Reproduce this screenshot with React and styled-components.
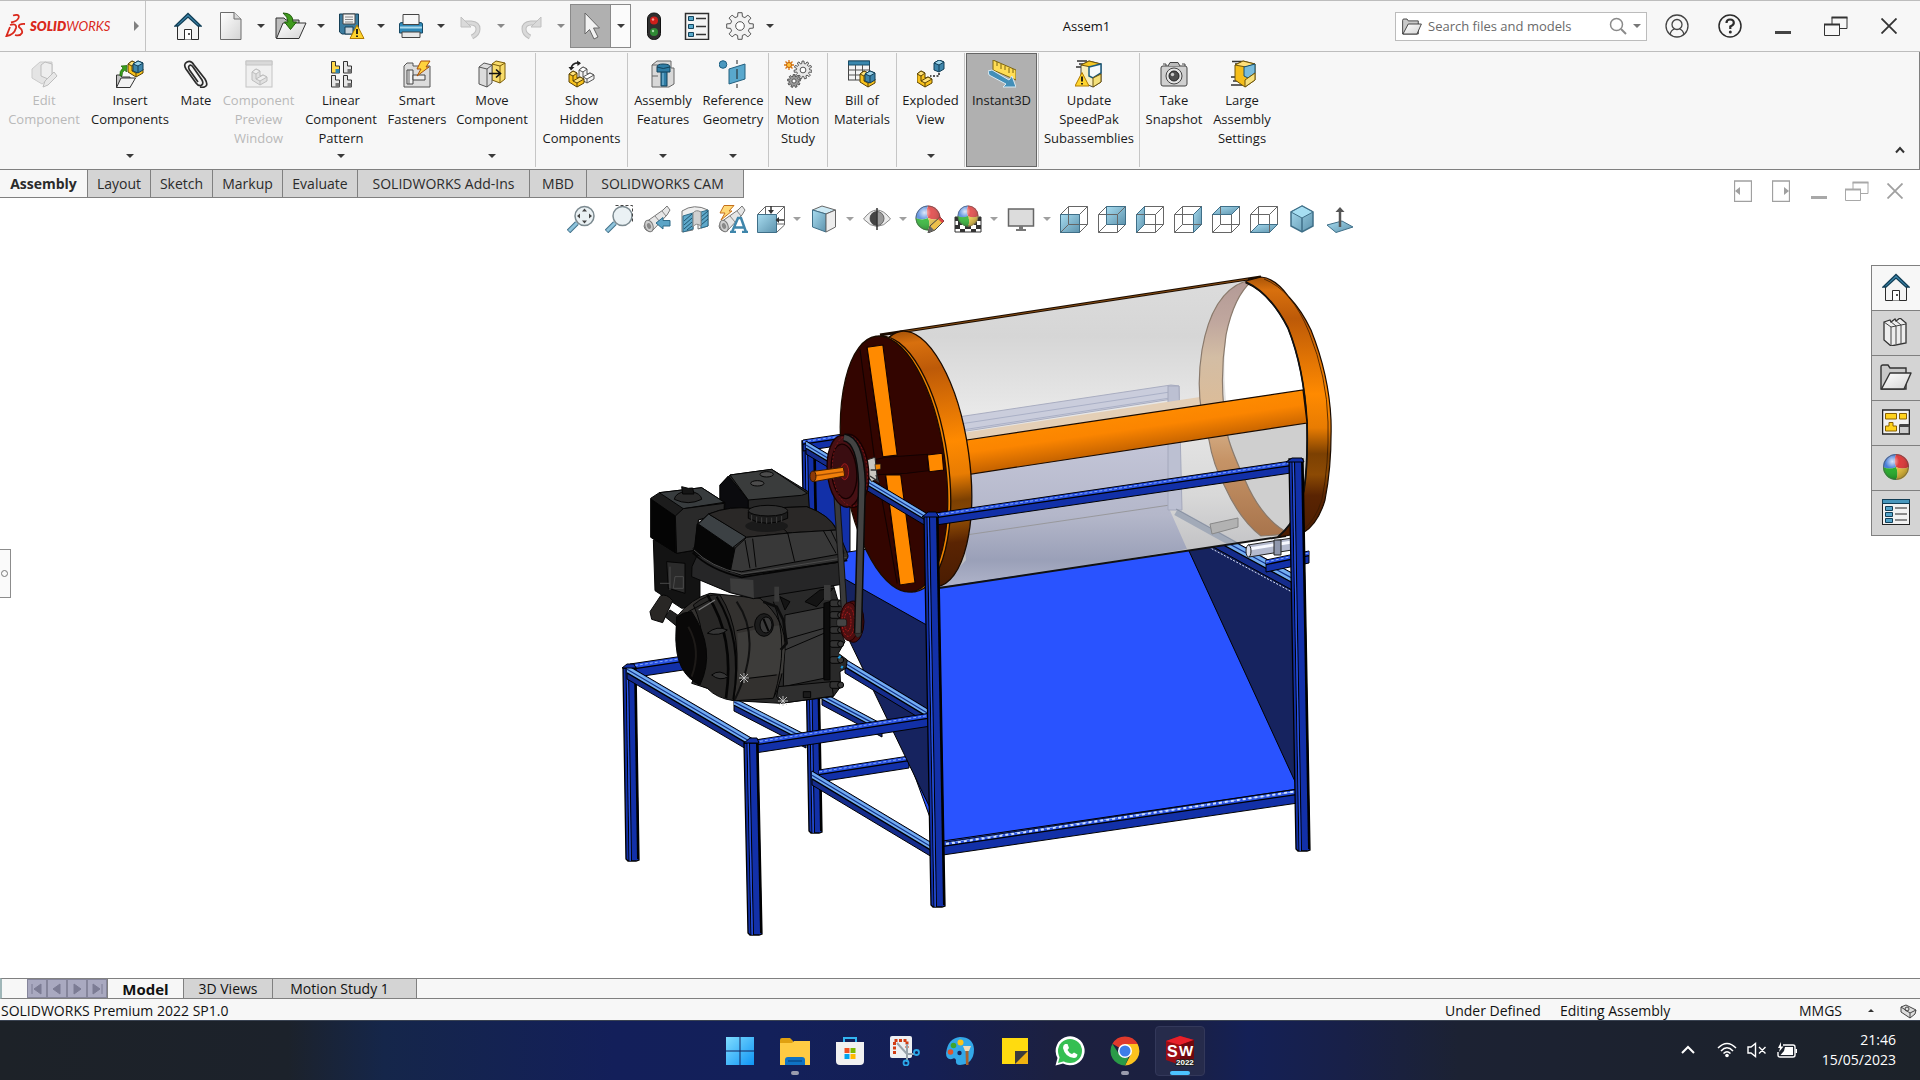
import { useState } from "react";
import styled, { createGlobalStyle, css } from "styled-components";

const GlobalStyle = createGlobalStyle`
  * {
    box-sizing: border-box;
  }
  body {
    margin: 0;
    background: #fff;
    color: #111;
    font-family: "Open Sans", "Noto Sans", sans-serif;
    font-size: 13px;
  }
  button {
    border: 0;
    padding: 0;
    background: none;
    color: inherit;
    font: inherit;
    cursor: pointer;
  }
  svg {
    display: block;
    flex: none;
  }
`;

const line = "#808080";
const paper = "#f7f7f7";
const gray = "#d4d4d4";

const Page = styled.div`
  display: flex;
  flex-direction: column;
  min-height: 100vh;
`;

/* ---------- title bar ---------- */

const TitleBar = styled.header`
  display: flex;
  align-items: center;
  height: 52px;
  background: ${paper};
  border-top: 1px solid #bdbdbd;
  border-bottom: 1px solid #bdbdbd;
`;

const Brand = styled.button`
  display: flex;
  align-items: center;
  gap: 4px;
  align-self: stretch;
  width: 146px;
  padding-left: 5px;
  border-right: 1px solid #c4c4c4;
  color: #da291c;
  font-family: Lato, sans-serif;
  font-size: 13px;
  font-style: italic;

  b {
    font-weight: 800;
  }
`;

const BrandArrow = styled.i`
  margin-left: auto;
  margin-right: 6px;
  border-left: 5px solid #808080;
  border-top: 5px solid transparent;
  border-bottom: 5px solid transparent;
`;

const Toolbar = styled.div`
  display: flex;
  align-items: center;
  padding-left: 20px;
`;

const ToolItem = styled.div`
  display: flex;
  align-items: center;
  height: 44px;
  ${(p) =>
    p.$active &&
    css`
      border: 1px solid #8a8a8a;
      margin: 0 1px;
      background: #fbfbfb;

      button:first-child {
        background: #b0b0b0;
        border-right: 1px solid #8a8a8a;
        width: 40px;
      }
      button:last-child {
        width: 19px;
      }
    `}
`;

const ToolButton = styled.button`
  display: flex;
  align-items: center;
  justify-content: center;
  width: 43px;
  height: 100%;
`;

const ArrowButton = styled.button`
  display: flex;
  align-items: center;
  justify-content: center;
  width: ${(p) => p.$w || 17}px;
  height: 100%;
`;

const Down = styled.i`
  border-top: 4px solid ${(p) => p.$color || "#3a3a3a"};
  border-left: 4px solid transparent;
  border-right: 4px solid transparent;
`;

const DocTitle = styled.h1`
  flex: 1;
  margin: 0;
  text-align: center;
  font-size: 13px;
  font-weight: 400;
`;

const Search = styled.label`
  display: flex;
  align-items: center;
  width: 252px;
  height: 29px;
  padding: 0 0 0 6px;
  background: #fff;
  border: 1px solid #bcbcbc;

  input {
    flex: 1;
    min-width: 0;
    margin-left: 6px;
    padding: 0;
    border: 0;
    outline: 0;
    background: none;
    font: inherit;
    font-size: 13px;
  }
  input::placeholder {
    color: #6a6a6a;
    opacity: 1;
  }
`;

const WindowTools = styled.div`
  display: flex;
  padding: 0 5px 0 3px;
`;

const WindowButton = styled.button`
  display: flex;
  align-items: center;
  justify-content: center;
  width: 53px;
  height: 44px;
`;

/* ---------- ribbon ---------- */

const Ribbon = styled.div`
  display: flex;
  height: 118px;
  padding: 1px 0 2px;
  background: ${paper};
  border-bottom: 1px solid ${line};
  border-right: 1px solid ${line};
`;

const Group = styled.div`
  display: flex;
  border-right: ${(p) => (p.$last ? 0 : 1)}px solid #c6c6c6;
`;

const RibbonButton = styled.button`
  display: flex;
  flex-direction: column;
  align-items: center;
  width: ${(p) => p.$w}px;
  padding-top: 7px;
  line-height: 19px;
  white-space: pre;
  color: ${(p) => (p.disabled ? "#b9b9b9" : "#1a1a1a")};

  svg {
    margin-bottom: 3px;
  }
  ${(p) =>
    p.disabled &&
    css`
      svg {
        opacity: 0.75;
      }
    `}
  ${(p) =>
    p.$active &&
    css`
      margin: 0 1px;
      padding-top: 6px;
      background: #b0b0b0;
      border: 1px solid #666;
    `}
`;

const RibbonArrow = styled.span`
  display: flex;
  margin-top: auto;
  padding-bottom: 9px;
`;

const Collapse = styled.button`
  display: flex;
  align-self: flex-end;
  margin-left: auto;
  padding: 0 14px 13px;
`;

/* ---------- command tabs ---------- */

const TabRow = styled.div`
  display: flex;
  align-items: flex-start;
  justify-content: space-between;
  height: 35px;
`;

const Tabs = styled.div`
  display: flex;
  height: 28px;
  border-bottom: 1px solid ${line};
`;

const Tab = styled.button`
  width: ${(p) => p.$w}px;
  height: 27px;
  padding-right: ${(p) => p.$pad || 0}px;
  border-right: 1px solid ${line};
  background: ${(p) => (p.$active ? paper : gray)};
  color: #2b2b2b;
  font-size: 14px;
  line-height: 26px;
  font-weight: ${(p) => (p.$active ? 700 : 400)};
`;

const DocTools = styled.div`
  display: flex;
  padding: 9px 6px 0 0;
`;

const DocButton = styled.button`
  display: flex;
  align-items: center;
  justify-content: center;
  width: 38px;
  height: 24px;
`;

const ViewBar = styled.div`
  display: flex;
  justify-content: center;
  height: 28px;
`;

const ViewItem = styled.div`
  display: flex;
  align-items: center;
`;

const ViewButton = styled.button`
  display: flex;
  justify-content: center;
  width: 38px;
`;

/* ---------- workspace ---------- */

const Work = styled.main`
  display: flex;
  flex: 1;
  align-items: flex-start;
`;

const Handle = styled.button`
  display: flex;
  align-items: center;
  justify-content: center;
  width: 11px;
  height: 49px;
  margin-top: 316px;
  padding-right: 2px;
  border: 1px solid #8c8c8c;
  border-left: 0;
  background: #fafafa;

  &::before {
    content: "";
    width: 5px;
    height: 5px;
    border: 1px solid #777;
    border-radius: 50%;
  }
`;

const Scene = styled.div`
  flex: 1;
  min-width: 0;

  svg {
    width: 100%;
    height: auto;
  }
`;

const TaskPane = styled.nav`
  display: flex;
  flex-direction: column;
  width: 49px;
  margin-top: 32px;
  border-top: 1px solid ${line};
  border-left: 1px solid ${line};
`;

const PaneButton = styled.button`
  display: flex;
  align-items: center;
  justify-content: center;
  height: 45px;
  padding-bottom: 2px;
  border-bottom: 1px solid ${line};
  background: ${(p) => (p.$active ? paper : gray)};
`;

/* ---------- bottom bars ---------- */

const BottomTabs = styled.div`
  display: flex;
  height: 21px;
  border-top: 1px solid ${line};
  border-bottom: 1px solid ${line};
  border-left: 2px solid #9fb6b8;
  background: ${paper};
`;

const NavButtons = styled.div`
  display: flex;
  width: 81px;
  margin-left: 25px;
  border-right: 1px solid ${line};
`;

const NavButton = styled.button`
  display: flex;
  align-items: center;
  justify-content: center;
  flex: 1;
  background: #a9a9c0;
  border: 1px solid #85859b;
`;

const BottomTab = styled.button`
  width: ${(p) => p.$w}px;
  padding-right: ${(p) => p.$pad || 0}px;
  border-right: 1px solid ${line};
  background: ${(p) => (p.$active ? paper : gray)};
  font-size: ${(p) => (p.$active ? 15 : 14)}px;
  line-height: 18px;
  font-weight: ${(p) => (p.$active ? 700 : 400)};
`;

const StatusBar = styled.footer`
  display: flex;
  align-items: center;
  height: 21px;
  padding: 3px 3px 0 1px;
  background: ${paper};
  font-size: 14px;
  line-height: 18px;
  overflow: hidden;
`;

const StatusRight = styled.div`
  display: flex;
  align-items: center;
  margin-left: auto;
`;

const StatusText = styled.span`
  width: ${(p) => p.$w}px;
`;

const Taskbar = styled.div`
  display: grid;
  grid-template-columns: 1fr auto 1fr;
  align-items: center;
  height: 60px;
  border-top: 1px solid #3a4352;
  background: linear-gradient(
    90deg,
    #1d2228 0%,
    #1c222b 15%,
    #15264a 20%,
    #131f5a 32%,
    #13205a 40%,
    #141f55 48%,
    #1c2040 55%,
    #1b2040 61%,
    #142056 65%,
    #182048 70%,
    #1c2233 76%,
    #1c2229 100%
  );
`;

const Apps = styled.div`
  display: flex;
  grid-column: 2;
  gap: 5px;
`;

const AppButton = styled.button`
  display: flex;
  flex-direction: column;
  align-items: center;
  width: 50px;
  height: 50px;
  padding-top: 9px;
  border-radius: 4px;
  border: 1px solid ${(p) => (p.$active ? "#33385a" : "transparent")};
  background: ${(p) => (p.$active ? "#262b4b" : "none")};

  &::after {
    content: "";
    width: ${(p) => (p.$active ? 20 : 8)}px;
    height: 4px;
    margin-top: 5px;
    border-radius: 2px;
    background: ${(p) => (p.$active ? "#4cc2ff" : p.$open ? "#9a9cae" : "none")};
  }
`;

const Tray = styled.div`
  display: flex;
  align-items: center;
  justify-content: flex-end;
  gap: 10px;
  padding: 0 24px 2px 0;
  color: #fff;
`;

const TrayChevron = styled.button`
  display: flex;
  margin-right: 12px;
`;

const Clock = styled.time`
  width: 89px;
  text-align: right;
  font-size: 14px;
  line-height: 20px;
`;

/* ---------- icons ---------- */

const Icon = ({ size = 28, w, h, box = "0 0 28 28", children }) => (
  <svg width={w || size} height={h || size} viewBox={box} fill="none" aria-hidden="true">
    {children}
  </svg>
);

// yellow bracket, origin at its top left corner, about 17 units wide
const Bracket = ({ t, fill = "#f8c21c", light = "#ffe27a", stroke = "#5a4205" }) => (
  <g transform={t} stroke={stroke} strokeLinejoin="round">
    <path d="M1 5 L5 2 L9 4 V9 L12 8 L16 10 V14 L9 18 L1 13Z" fill={fill} />
    <path d="M1 5 L5 2 L9 4 L5 7Z M5 12 L12 8 L16 10 L9 14Z" fill={light} />
    <path d="M5 7 V12 M9 14 V18" />
  </g>
);

const CubeMini = ({ t }) => (
  <g transform={t} stroke="#123f57" strokeLinejoin="round">
    <path d="M0 3 L5 0 L10 2 V9 L5 12 L0 10Z" fill="#3f86ab" />
    <path d="M0 3 L5 0 L10 2 L5 5Z" fill="#9cd3ea" />
    <path d="M5 5 V12" />
  </g>
);

const Warn = ({ t }) => (
  <g transform={t}>
    <path d="M7 0.5 L14 14 H0Z" fill="#ffd52e" stroke="#b07a00" strokeLinejoin="round" />
    <path d="M7 4.5 V9.5 M7 11 V12.6" stroke="#111" strokeWidth="1.8" />
  </g>
);

const HouseIcon = () => (
  <Icon>
    <path d="M3.5 13 L14 3.5 L24.5 13 V27.5 H3.5Z" fill="#f4f4f4" stroke="#2b2b2b" />
    <path d="M1 14 L14 1.5 L27 14 L24 14 L14 5 L4 14Z" fill="#3c87ad" stroke="#123f57" strokeWidth="1.3" />
    <path d="M10.5 27.5 V17.5 H17.5 V27.5" fill="#fff" stroke="#2b2b2b" />
    <path d="M15 21 V23" stroke="#555" strokeWidth="2" />
  </Icon>
);

const NewIcon = () => (
  <Icon>
    <path d="M3.5 0.5 H17 L24 7 V27.5 H3.5Z" fill="url(#whiteFill)" stroke="#6c6c6c" />
    <path d="M17 0.5 V7 H24" fill="#d8d8d8" stroke="#6c6c6c" />
  </Icon>
);

const OpenIcon = () => (
  <Icon w={32} box="0 0 32 28">
    <path d="M1 26 V6 H9 L11 8 H24 V26Z" fill="#bdbdbd" stroke="#333" />
    <path d="M8 11 H31 L24 26.5 H1.5Z" fill="url(#whiteFill)" stroke="#333" strokeLinejoin="round" />
    <path d="M8 1 Q18 1 18 10 H21.5 L15.5 17.5 L9.5 10 H13 Q13 5 8 1Z" fill="#3f9a1d" stroke="#1f5c0a" />
  </Icon>
);

const SaveIcon = () => (
  <Icon>
    <path d="M2.5 2 H21.5 V22 H5 L2.5 20Z" fill="#3c7c9f" stroke="#153f56" />
    <path d="M6 2 H18 V12 H6Z" fill="#f3f3f3" stroke="#444" />
    <path d="M8 5 H16 M8 7.5 H16 M8 10 H16" stroke="#888" />
    <path d="M8 15 H16 V22 H8Z" fill="#c8d3da" stroke="#153f56" />
    <Warn t="translate(13 12.5)" />
  </Icon>
);

const PrintIcon = () => (
  <Icon>
    <path d="M2.5 12 Q2.5 10.5 5 10.5 H23 Q25.5 10.5 25.5 12 V21 H2.5Z" fill="#2f89b8" stroke="#174a66" />
    <path d="M6 2.5 H22 V12.5 H6Z" fill="#f7f7f7" stroke="#444" />
    <path d="M3 15.5 H25" stroke="#a9d8ec" strokeWidth="2" />
    <path d="M5 20 H23 V25.5 H5Z" fill="#e8e8e8" stroke="#444" />
  </Icon>
);

const UndoIcon = ({ flip }) => (
  <Icon>
    <g transform={flip ? "translate(28 0) scale(-1 1)" : undefined}>
      <path d="M7 11 H14 Q21 11.5 21 17 Q21 22 15 25" stroke="#bdbdbd" strokeWidth="5" />
      <path d="M7 11 H14 Q21 11.5 21 17 Q21 22 15 25" stroke="#d9d9d9" strokeWidth="3" />
      <path d="M4 5 V15 H14Z" fill="#dadada" stroke="#c0c0c0" />
    </g>
  </Icon>
);

const CursorIcon = () => (
  <Icon>
    <path d="M8 1 V22 L12.5 17.5 L17 27 L21 25 L16.5 16 H22.5Z" fill="#f2f2f2" stroke="#666" />
  </Icon>
);

const LightIcon = () => (
  <Icon>
    <rect x="7.5" y="1" width="13" height="26.5" rx="6" fill="#2f2f2f" stroke="#111" />
    <circle cx="14" cy="8.5" r="4" fill="#cf1f1a" />
    <circle cx="14" cy="20" r="4" fill="#2f8a35" />
    <circle cx="13" cy="7.5" r="1.2" fill="#f59a94" />
    <circle cx="13" cy="19" r="1.2" fill="#a7dca8" />
  </Icon>
);

const ListIcon = () => (
  <Icon>
    <rect x="2.5" y="1.5" width="23" height="26" fill="#f4f4f4" stroke="#2e2e2e" strokeWidth="1.5" />
    <path d="M5.5 4.5 h5 v4 h-5z M5.5 12.5 h5 v4 h-5z M5.5 20.5 h5 v4 h-5z" fill="#58a9cb" stroke="#14455e" />
    <path d="M13 6.5 H23 M13 14.5 H23 M13 22.5 H23" stroke="#333" strokeWidth="1.5" />
  </Icon>
);

const gearPath = (teeth, outer, inner) => {
  const pts = [];
  for (let i = 0; i < teeth; i++) {
    [
      [-0.32, inner],
      [-0.2, outer],
      [0.2, outer],
      [0.32, inner],
    ].forEach(([k, r]) => {
      const a = ((i + k) / teeth) * Math.PI * 2 - Math.PI / 2;
      pts.push(`${(r * Math.cos(a)).toFixed(1)} ${(r * Math.sin(a)).toFixed(1)}`);
    });
  }
  return `M${pts.join("L")}Z`;
};

const Gear = ({ t, r, fill = "#eee", teeth = 8 }) => (
  <g transform={t} stroke="#555" strokeLinejoin="round">
    <path d={gearPath(teeth, r, r * 0.72)} fill={fill} />
    <circle r={r * 0.32} fill="#fff" />
  </g>
);

const Sphere = ({ x = 14, y = 14, r = 13, soft }) => (
  <g transform={`translate(${x} ${y}) scale(${r / 13})`}>
    <path d="M0 0 Q-3 -6 0 -13 A13 13 0 0 1 13 0 Q6 3 0 0Z" fill={soft ? "#e24a4a" : "#dd2b2b"} />
    <path d="M0 0 Q-7 3 -13 0 A13 13 0 0 1 0 -13 Q-3 -6 0 0Z" fill={soft ? "#5a8fe0" : "#3a74d6"} />
    <path d="M0 0 Q3 6 0 13 A13 13 0 0 1 -13 0 Q-6 3 0 0Z" fill={soft ? "#35b83a" : "#18a81c"} />
    <path d="M0 0 Q6 3 13 0 A13 13 0 0 1 0 13 Q3 6 0 0Z" fill={soft ? "#ecc84c" : "#e3b92c"} />
    <circle r="12.5" fill="url(#gloss)" stroke="#555" strokeOpacity=".7" />
  </g>
);

const FolderIcon = ({ w = 32, h = 26 }) => (
  <Icon w={w} h={h} box="0 0 32 26">
    <path d="M1 25 V3 Q1 1 3 1 H8 L10 4 H26 V25Z" fill="#c9c9c9" stroke="#333" strokeWidth="1.4" />
    <path d="M10 9 H31 L24 25 H1.5Z" fill="url(#whiteFill)" stroke="#333" strokeWidth="1.4" strokeLinejoin="round" />
  </Icon>
);

const WireCube = ({ face }) => (
  <Icon>
    <path d={face} fill="url(#faceFill)" />
    <path
      d="M0.5 9.5 H19.5 V27.5 H0.5Z M8.5 1.5 H27.5 V19.5 H8.5Z M0.5 9.5 L8.5 1.5 M19.5 9.5 L27.5 1.5 M19.5 27.5 L27.5 19.5 M0.5 27.5 L8.5 19.5"
      stroke="#666"
    />
    <path d={face} stroke="#3f6f88" />
  </Icon>
);

const Scope = () => (
  <>
    <path d="M3 17 L20 5 L24 1 L27 5 L24 10 L10 25 Q2 28 1 21Z" fill="#e6e6e6" stroke="#777" />
    <path d="M12 11 L17 17 M19 6 L23 11" stroke="#888" />
    <ellipse cx="6" cy="21" rx="4" ry="6" transform="rotate(-20 6 21)" fill="#cfcfcf" stroke="#777" />
    <ellipse cx="6" cy="21" rx="2" ry="3" transform="rotate(-20 6 21)" fill="#888" />
  </>
);

const Magnifier = ({ children }) => (
  <Icon>
    <path d="M1.5 26.5 L10 18" stroke="#3f6f88" strokeWidth="5" />
    <path d="M2 26 L10 18" stroke="#8fc4dc" strokeWidth="3" />
    <circle cx="17.5" cy="11" r="9.5" fill="#eaf1f4" stroke="#7c8a90" strokeWidth="1.5" />
    {children}
  </Icon>
);

const RestoreIcon = ({ color }) => (
  <Icon w={24} h={21} box="0 0 24 21">
    <path d="M8 8 V1.5 H23 V12.5 H16" stroke={color} />
    <path d="M7.5 1.5 H23.5" stroke={color} strokeWidth="2" />
    <path d="M0.5 8.5 H15.5 V19.5 H0.5Z" stroke={color} />
    <path d="M0 8.5 H16" stroke={color} strokeWidth="2" />
  </Icon>
);

const CloseIcon = ({ color }) => (
  <Icon size={16} box="0 0 16 16">
    <path d="M0.5 0.5 L15.5 15.5 M15.5 0.5 L0.5 15.5" stroke={color} strokeWidth="1.8" />
  </Icon>
);

const MinIcon = ({ color }) => (
  <Icon size={16} box="0 0 16 16">
    <path d="M0 14.5 H16" stroke={color} strokeWidth="3" />
  </Icon>
);

const ribbonIcons = {
  edit: (
    <Icon>
      <path d="M2 9 L10 2 L22 2 V17 L12 24 L2 18Z" fill="#dedede" stroke="#bdbdbd" />
      <path d="M11 5 L15 2 L22 4 V16 L18 19 L11 16Z" fill="#ececec" stroke="#aaa" />
      <path d="M13 27 L15 21 L24 12 L27 16 L18 25Z" fill="#e4e4e4" stroke="#aaa" />
    </Icon>
  ),
  insert: (
    <Icon>
      <Bracket t="translate(11 -1)" />
      <CubeMini t="translate(17 1)" />
      <path d="M0.5 27.5 V15 H4 L6 17 H14 V27.5Z" fill="#c4c4c4" stroke="#333" />
      <path d="M5 18 H19.5 L14 27.5 H0.5Z" fill="#f2f2f2" stroke="#333" />
      <path d="M4 16 Q3 11 7 8 L5 6 L11 5.5 L10.5 12 L8.5 10 Q6 12 6 16Z" fill="#39a01c" stroke="#1d6309" strokeWidth=".7" />
    </Icon>
  ),
  mate: (
    <Icon>
      <path
        d="M11 7 L20 20 Q22 24 19 25.5 Q16 26 14 23 L4 9 Q1 4 5 2 Q9 0 12 5 L23 19 Q26 24 24 26 Q22 28 18 27 M11 7 Q9 4 7 6 Q6 7 7.5 10 L16 22"
        stroke="#2c2c2c"
        strokeWidth="1.7"
      />
    </Icon>
  ),
  preview: (
    <Icon>
      <rect x="1" y="1" width="26" height="26" fill="#eee" stroke="#b4b4b4" />
      <path d="M1 1 H27 V5 H1Z" fill="#d0d0d0" stroke="#b4b4b4" />
      <Bracket t="translate(6 7)" fill="#dadada" light="#eee" stroke="#aaa" />
    </Icon>
  ),
  linear: (
    <Icon>
      {[
        [4, 1, "#ffd84a"],
        [16, 1, "#e6e6e6"],
        [4, 15, "#e6e6e6"],
        [16, 15, "#e6e6e6"],
      ].map(([x, y, f]) => (
        <g key={`${x}-${y}`} transform={`translate(${x} ${y})`}>
          <path d="M0.5 0.5 H4.5 V5 H8.5 V12 H0.5Z" fill={f} stroke="#333" />
          <path d="M4.5 8 H8.5 V12 H4.5Z" fill={f === "#ffd84a" ? "#2f86b0" : "#777"} />
        </g>
      ))}
    </Icon>
  ),
  smart: (
    <Icon>
      <path d="M1 27 V6 L4 3 H10 V6 H27 V27Z" fill="#dcdcdc" stroke="#555" />
      <path d="M4 10 H10 V24 H4Z" fill="#f4f4f4" stroke="#444" />
      <path d="M10 15 H22 V20 H10Z" fill="#eee" stroke="#444" />
      <path d="M6 10 V24" stroke="#666" />
      <path d="M18 1 H27 L23 7 H26 L14 16 L18 9 H14Z" fill="#ffd23c" stroke="#a8500c" strokeLinejoin="round" />
    </Icon>
  ),
  move: (
    <Icon>
      <path d="M14 4 L18 1 L27 3 V19 L22 23 L14 20Z" fill="#f8dc6a" stroke="#7a5c08" />
      <path d="M22 6 L27 3 M22 6 V23 M14 4 L22 6" stroke="#7a5c08" />
      <path d="M1 7 L6 3 L14 5 V23 L9 27 L1 24Z" fill="#dcdcdc" stroke="#555" />
      <path d="M1 7 L9 9 L14 5 M9 9 V27" stroke="#555" />
      <path d="M11 13.5 H22 M18 9.5 L22.5 13.5 L18 17.5" stroke="#111" strokeWidth="1.6" />
    </Icon>
  ),
  show: (
    <Icon>
      <Bracket t="translate(10 5)" fill="#f2f2f2" light="#fff" stroke="#555" />
      <Bracket t="translate(0 9)" />
      <path d="M3 9 Q4 2 12 3" stroke="#222" strokeWidth="1.6" />
      <path d="M9 0.5 L13 3.2 L9.5 6Z M0.5 7 H6.5 L3 10.5Z" fill="#222" />
    </Icon>
  ),
  features: (
    <Icon>
      <path d="M3 5 L8 1 H22 V8 H25 V24 L20 27 H3Z" fill="#d8d8d8" stroke="#666" />
      <path d="M3 16 H9 M3 5 H9" stroke="#666" />
      <path d="M8 7 Q8 4 14 4 Q21 4 21 7 V12 H18 V26 H12 V12 H8Z" fill="#2f7da5" stroke="#12425b" />
      <path d="M8 7 Q14 10 21 7 M12 12 H18" stroke="#12425b" />
      <path d="M14 13 V25" stroke="#8cc6e0" />
    </Icon>
  ),
  reference: (
    <Icon>
      <circle cx="4" cy="4.5" r="3.8" fill="#4a98bf" stroke="#1d5f82" />
      <path d="M10 9 L26 4 V19 L10 24Z" fill="#59a8cd" stroke="#24607f" />
      <path d="M18 0 V4 M18 9 V19 M18 24 V28" stroke="#222" />
    </Icon>
  ),
  motion: (
    <Icon>
      <Gear t="translate(19 10)" r={9} fill="#e9e9e9" teeth={11} />
      <Gear t="translate(10 21)" r={6.5} fill="#9a9a9a" teeth={9} />
      <path d="M5 0 V10 M0 5 H10 M1.5 1.5 L8.5 8.5 M8.5 1.5 L1.5 8.5" stroke="#d8730f" strokeWidth="1.3" />
      <circle cx="5" cy="5" r="2.5" fill="#ffc23a" stroke="#c4620a" />
    </Icon>
  ),
  bom: (
    <Icon>
      <rect x="0.5" y="1" width="21" height="19" fill="#f4f4f4" stroke="#444" />
      <path d="M0.5 1 H21.5 V5 H0.5Z" fill="#3a87ad" stroke="#164e6b" />
      <path d="M0.5 10 H21.5 M0.5 15 H21.5 M7.5 5 V20 M14.5 5 V20" stroke="#555" />
      <Bracket t="translate(11 9)" />
      <CubeMini t="translate(17 11)" />
    </Icon>
  ),
  exploded: (
    <Icon>
      <Bracket t="translate(-1 9)" />
      <CubeMini t="translate(17 0)" />
      <path d="M22 13 V16 H13" stroke="#222" strokeWidth="1.5" strokeDasharray="2 1.5" />
    </Icon>
  ),
  instant: (
    <Icon>
      <path d="M5 0 L28 10 V20 L5 10Z" fill="#ffdd55" stroke="#7c640e" />
      <path d="M9 2 V6 M13 4 V9 M17 6 V10 M21 8 V13 M25 9 V13" stroke="#7c640e" />
      <path d="M0 11 L4 10 L21 20 L24 16 L28 27 L15 27 L18 24 L1 15Z" fill="#438fb8" stroke="#dcebf3" />
    </Icon>
  ),
  speedpak: (
    <Icon>
      <path d="M2 1 H12 M4 4 H12 M1 7 H8" stroke="#333" strokeWidth="1.5" />
      <path d="M6 5 L14 1 L26 4 V22 L18 27 L6 22Z" fill="#f8eebb" stroke="#444" />
      <path d="M6 5 L14 1 L26 4 L16 7Z" fill="#f4c724" stroke="#6e540a" />
      <path d="M14 7 L26 4 V13 L18 18 L14 16Z" fill="#f4f9fc" stroke="#1c5b7d" strokeWidth="1.5" />
      <path d="M18 18 L26 14 V22 L18 27Z" fill="#f4e07a" stroke="#6e540a" />
      <Warn t="translate(0 12)" />
    </Icon>
  ),
  snapshot: (
    <Icon>
      <rect x="1" y="6" width="26" height="20" rx="2" fill="#d0d0d0" stroke="#444" />
      <path d="M8 6 L10 2.5 H18 L20 6" fill="#bbb" stroke="#444" />
      <path d="M3 4 H6 V6 M22 4 H25 V6" stroke="#444" />
      <circle cx="14" cy="16" r="8" fill="#e5e5e5" stroke="#444" />
      <circle cx="14" cy="16" r="5" fill="#4f4f4f" stroke="#222" />
      <circle cx="12.5" cy="14.5" r="1.7" fill="#ccc" />
    </Icon>
  ),
  large: (
    <Icon>
      <path d="M4 1.5 H14 M7 4 H14 M3 17 H11 M5 21 H14 M3 25 H16" stroke="#333" strokeWidth="1.5" />
      <path d="M7 5 L15 1 L27 4 V20 L17 27 L7 20Z" fill="#f5be1a" stroke="#6e540a" />
      <path d="M7 5 L15 1 L27 4 L18 7Z" fill="#ffe07a" stroke="#6e540a" />
      <path d="M16 7 L27 4 V13 L20 18 L16 16Z" fill="#79bcdc" stroke="#174f6c" />
      <path d="M17 20 L27 13 V20 L17 27Z" fill="#f7e07c" stroke="#6e540a" />
    </Icon>
  ),
};

const ribbon = [
  [
    { id: "edit", w: 88, label: "Edit\nComponent", disabled: true },
    { id: "insert", w: 84, label: "Insert\nComponents", menu: true },
    { id: "mate", w: 48, label: "Mate" },
    { id: "preview", w: 77, label: "Component\nPreview\nWindow", disabled: true },
    { id: "linear", w: 88, label: "Linear\nComponent\nPattern", menu: true },
    { id: "smart", w: 64, label: "Smart\nFasteners" },
    { id: "move", w: 86, label: "Move\nComponent", menu: true },
  ],
  [{ id: "show", w: 91, label: "Show\nHidden\nComponents" }],
  [
    { id: "features", w: 70, label: "Assembly\nFeatures", menu: true },
    { id: "reference", w: 70, label: "Reference\nGeometry", menu: true },
  ],
  [{ id: "motion", w: 58, label: "New\nMotion\nStudy" }],
  [{ id: "bom", w: 68, label: "Bill of\nMaterials" }],
  [{ id: "exploded", w: 67, label: "Exploded\nView", menu: true }],
  [{ id: "instant", w: 71, label: "Instant3D", active: true }],
  [{ id: "speedpak", w: 100, label: "Update\nSpeedPak\nSubassemblies" }],
  [
    { id: "snapshot", w: 68, label: "Take\nSnapshot" },
    { id: "large", w: 68, label: "Large\nAssembly\nSettings" },
  ],
];

const tools = [
  { name: "Home", icon: <HouseIcon />, plain: true },
  { name: "New", icon: <NewIcon /> },
  { name: "Open", icon: <OpenIcon /> },
  { name: "Save", icon: <SaveIcon /> },
  { name: "Print", icon: <PrintIcon /> },
  { name: "Undo", icon: <UndoIcon />, dim: true },
  { name: "Redo", icon: <UndoIcon flip />, dim: true },
  { name: "Select", icon: <CursorIcon />, active: true },
  { name: "Rebuild", icon: <LightIcon />, plain: true },
  { name: "File properties", icon: <ListIcon />, plain: true },
  {
    name: "Options",
    icon: (
      <Icon>
        <Gear t="translate(14 14)" r={13.5} fill="#f2f2f2" />
      </Icon>
    ),
  },
];

const viewTools = [
  {
    name: "Zoom to fit",
    icon: (
      <Magnifier>
        <path d="M17.5 3.5 L20 6.5 H15Z M17.5 18.5 L20 15.5 H15Z M10 11 L13 8.5 V13.5Z M25 11 L22 8.5 V13.5Z" fill="#444" />
      </Magnifier>
    ),
  },
  {
    name: "Zoom to area",
    icon: (
      <Magnifier>
        <path d="M10.5 0.5 H27.5 V17.5" stroke="#444" strokeDasharray="3 2" />
      </Magnifier>
    ),
  },
  {
    name: "Previous view",
    icon: (
      <Icon>
        <Scope />
        <path d="M13 18 L20 12.5 V15.5 H27 V21 H20 V24Z" fill="#5ba4c6" stroke="#2f6b88" />
      </Icon>
    ),
  },
  {
    name: "Section view",
    icon: (
      <Icon>
        <path d="M1 6 Q13 -2 27 5 V21 L17 24 V14 Q14 12 12 14 V25 L1 27Z" fill="#eee" stroke="#777" />
        <path d="M2 11 L12 8 V24 L2 27Z M20 7 L27 5 V21 L20 23Z" fill="#5fa9cb" stroke="#2f6b88" />
        <path d="M3 16 L11 9 M3 20 L11 13 M3 24 L11 17 M6 25 L11 21 M20 12 L27 6 M20 16 L27 10 M20 20 L27 14" stroke="#1f556f" />
        <path d="M12 8 Q15 4 20 7 V21 Q15 17 12 22Z" fill="#d0d0d0" stroke="#888" />
      </Icon>
    ),
  },
  {
    name: "Dynamic annotation views",
    icon: (
      <Icon w={30} box="0 0 30 28">
        <Scope />
        <path d="M6 0.5 H16 L11 6 H14 L3 15 L7 8 H2Z" fill="#ffd876" stroke="#c4701c" />
        <path d="M14 27 L20 13 H23 L28 27 M17 22.5 H26 M12 27 H18 M24 27 H30" stroke="#3f86ab" strokeWidth="2.5" />
      </Icon>
    ),
  },
  {
    name: "View orientation",
    menu: true,
    icon: (
      <Icon>
        <path d="M8.5 1.5 H27.5 V20 L19.5 27.5 M0.5 9.5 L8.5 1.5 M19.5 9.5 L27.5 1.5 M8.5 1.5 V9 M20 19 H27" stroke="#666" />
        <path d="M0.5 9.5 H19.5 V27.5 H0.5Z" fill="url(#faceFill)" stroke="#3f6f88" />
        <path d="M14 1 V6 M27 15 H22" stroke="#333" strokeWidth="1.5" />
        <path d="M11 5 H17 L14 9Z M22 12 V18 L18.5 15Z" fill="#333" />
      </Icon>
    ),
  },
  {
    name: "Display style",
    menu: true,
    icon: (
      <Icon>
        <path d="M2.5 5 L12 1 L25.5 5 L16 9Z" fill="#cdeaf5" stroke="#666" />
        <path d="M2.5 5 L16 9 V27 L2.5 22Z" fill="url(#faceFill)" stroke="#3f6f88" />
        <path d="M16 9 L25.5 5 V22 L16 27Z" fill="#ededed" stroke="#666" />
      </Icon>
    ),
  },
  {
    name: "Hide/show items",
    menu: true,
    icon: (
      <Icon>
        <path d="M0.5 14 Q14 -4 27.5 14 Q14 29 0.5 14Z" fill="#ececec" stroke="#888" />
        <circle cx="14" cy="13.5" r="7" fill="#999" stroke="#666" />
        <path d="M14 6.5 A7 7 0 0 0 14 20.5Z" fill="#444" />
        <path d="M14 3 V25" stroke="#333" strokeWidth="1.5" />
      </Icon>
    ),
  },
  {
    name: "Edit appearance",
    icon: (
      <Icon w={30} box="0 0 30 28">
        <Sphere x={13} y={13} r={12.5} soft />
        <path d="M13 28 L15 21 L25 12 L29 16 L20 25Z" fill="#edc04b" stroke="#444" />
        <path d="M25 12 L29 16 L27 18 L23 14Z" fill="#d44" />
        <path d="M13 28 L15 21 L19 25Z" fill="#666" />
      </Icon>
    ),
  },
  {
    name: "Apply scene",
    menu: true,
    icon: (
      <Icon>
        <path d="M1 12 H27 V27 H1Z" fill="#fff" stroke="#333" />
        <path
          d="M1 12 h5 v4 h-5z M22 12 h5 v4 h-5z M4 16 h4 v4 h-4z M20 16 h3 v4 h-3z M1 20 h5 v4 h-5z M11 20 h6 v4 h-6z M22 20 h5 v4 h-5z M6 24 h5 v3 h-5z M17 24 h5 v3 h-5z"
          fill="#333"
        />
        <Sphere x={14} y={11} r={10.5} soft />
      </Icon>
    ),
  },
  {
    name: "View settings",
    menu: true,
    icon: (
      <Icon>
        <rect x="1.500" y="4" width="25" height="17" fill="#dcdcdc" stroke="#666" strokeWidth="1.5" />
        <path d="M12 21 H16 V24 H12Z M9 24 H19 V26 H9Z" fill="#777" />
      </Icon>
    ),
  },
  { name: "Front", icon: <WireCube face="M0.5 9.5 H19.5 V27.5 H0.5Z" /> },
  { name: "Back", icon: <WireCube face="M8.5 1.5 H27.5 V19.5 H8.5Z" /> },
  { name: "Left", icon: <WireCube face="M0.5 9.5 L8.5 1.5 V19.5 L0.5 27.5Z" /> },
  { name: "Right", icon: <WireCube face="M19.5 9.5 L27.5 1.5 V19.5 L19.5 27.5Z" /> },
  { name: "Top", icon: <WireCube face="M0.5 9.5 L8.5 1.5 H27.5 L19.5 9.5Z" /> },
  { name: "Bottom", icon: <WireCube face="M0.5 27.5 L8.5 19.5 H27.5 L19.5 27.5Z" /> },
  {
    name: "Isometric",
    icon: (
      <Icon>
        <path d="M14 1 L25 7 V21 L14 27 L3 21 V7Z" fill="url(#faceFill)" stroke="#3f6f88" strokeWidth="1.5" />
        <path d="M3 7 L14 13 L25 7 L14 1Z" fill="#a6def2" stroke="#3f6f88" />
        <path d="M14 13 V27" stroke="#3f6f88" strokeWidth="1.5" />
      </Icon>
    ),
  },
  {
    name: "Normal to",
    icon: (
      <Icon>
        <path d="M1 20 L16 16 L27 22 L10 27.5Z" fill="url(#faceFill)" stroke="#3f6f88" />
        <path d="M14 6 V22" stroke="#555" strokeWidth="2.5" />
        <path d="M14 2 L18.5 7 H9.5Z" fill="#555" />
      </Icon>
    ),
  },
];

const paneTools = [
  { name: "Resources", icon: <HouseIcon /> },
  {
    name: "Design library",
    icon: (
      <Icon>
        <path d="M2 4 L8 2 L9 4 L13 1 L14 3 L18 0 L24 5 V25 L9 28 L2 22Z" fill="#eee" stroke="#333" strokeWidth="1.3" />
        <path d="M9 9 L24 6 M9 9 V27 M14 8 V26 M19 7 V26 M2 4 L9 9 M8 3 L14 8 M13 2 L19 7" stroke="#444" />
      </Icon>
    ),
  },
  { name: "File explorer", icon: <FolderIcon /> },
  {
    name: "View palette",
    icon: (
      <Icon>
        <rect x="0.5" y="2" width="27" height="24" fill="#f2f2f2" stroke="#222" strokeWidth="1.5" />
        <path
          d="M3.5 5.5 H14.5 V11 H3.5Z M17.5 5.5 H24.5 V11 H17.5Z M3.5 23 V18 H7 V14.5 H11 V18 H14.5 V23Z"
          fill="#ffd21c"
          stroke="#8a6200"
        />
        <path d="M17.5 17 H27 V25.5 H17.5Z" fill="#ccc" stroke="#444" />
        <path d="M17.5 17.5 H27" stroke="#444" strokeWidth="3" />
      </Icon>
    ),
  },
  {
    name: "Appearances",
    icon: (
      <Icon>
        <Sphere />
      </Icon>
    ),
  },
  {
    name: "Custom properties",
    icon: (
      <Icon>
        <rect x="0.5" y="1.5" width="27" height="25" fill="#f2f2f2" stroke="#222" />
        <path d="M0.5 1.5 H27.5 V5.5 H0.5Z" fill="#4897bd" stroke="#123f57" />
        <path d="M3.5 8.5 h7 v4 h-7z M3.5 14.5 h7 v4 h-7z M3.5 20.5 h7 v4 h-7z" fill="#55a3c8" stroke="#123f57" />
        <path d="M13 10 H25 M13 16 H25 M13 22 H25" stroke="#222" />
      </Icon>
    ),
  },
];

const tabs = [
  ["Assembly", 88],
  ["Layout", 63],
  ["Sketch", 62],
  ["Markup", 70],
  ["Evaluate", 75],
  ["SOLIDWORKS Add-Ins", 172],
  ["MBD", 57],
  ["SOLIDWORKS CAM", 157, 5],
];

const apps = [
  {
    name: "Start",
    icon: (
      <Icon size={30} box="0 0 30 30">
        <path d="M1 1 H14.5 V14.5 H1Z M15.5 1 H29 V14.5 H15.5Z M1 15.5 H14.5 V29 H1Z M15.5 15.5 H29 V29 H15.5Z" fill="url(#winFill)" />
      </Icon>
    ),
  },
  {
    name: "File Explorer",
    open: true,
    icon: (
      <Icon size={30} box="0 0 30 30">
        <path d="M0 4 Q0 2 2 2 H10 L13 5 V9 H0Z" fill="#e0a010" />
        <path d="M0 7 L12 7 L14 5 H30 V29 H0Z" fill="#ffcb43" />
        <path d="M5 29 V24 Q5 21 8 21 H22 Q25 21 25 24 V29Z" fill="#0f72c4" />
        <path d="M8 25 H22" stroke="#0a4c8c" strokeWidth="1.5" />
      </Icon>
    ),
  },
  {
    name: "Store",
    icon: (
      <Icon size={30} box="0 0 30 30">
        <path d="M9 7 V2 H21 V7" stroke="#32b4f0" strokeWidth="2" />
        <path d="M1 6 H29 V25 Q29 29 25 29 H5 Q1 29 1 25Z" fill="#f1f1f1" />
        <path d="M9.5 12 h5 v5 h-5z" fill="#f25022" />
        <path d="M15.5 12 h5 v5 h-5z" fill="#7fba00" />
        <path d="M9.5 18 h5 v5 h-5z" fill="#00a4ef" />
        <path d="M15.5 18 h5 v5 h-5z" fill="#ffb900" />
      </Icon>
    ),
  },
  {
    name: "Snipping Tool",
    icon: (
      <Icon size={30} box="0 0 30 30">
        <rect x="0" y="0" width="22" height="22" rx="2" fill="#eef0f2" />
        <path d="M4.500 18 V4.5 H17 V12" stroke="#d33c12" strokeWidth="3" strokeDasharray="3 1.5" />
        <path d="M7 7 L17 18 H25 M17 8 V26" stroke="#9aa3aa" strokeWidth="2" />
        <circle cx="26.5" cy="16.5" r="2.5" stroke="#2aa7e8" strokeWidth="1.8" />
        <circle cx="16" cy="27" r="2.5" stroke="#2aa7e8" strokeWidth="1.8" />
      </Icon>
    ),
  },
  {
    name: "Paint",
    icon: (
      <Icon size={30} box="0 0 30 30">
        <path d="M15 1 Q28 1 29 13 Q29 28 15 29 Q10 29 11 24 Q10 21 7 23 Q1 24 1 17 Q3 2 15 1Z" fill="#33a8e8" />
        <circle cx="15.5" cy="6.5" r="3" fill="#fcc419" />
        <circle cx="8.5" cy="9.5" r="2.8" fill="#3fa52b" />
        <circle cx="5.5" cy="16" r="2.8" fill="#e0552b" />
        <circle cx="14.5" cy="17" r="2.2" fill="#17255a" />
        <path d="M18 10 H26 L24 15 H20Z" fill="#f0d9b8" />
        <path d="M20.5 15 H23.5 V29 H21Z" fill="#a8622c" />
      </Icon>
    ),
  },
  {
    name: "Sticky Notes",
    icon: (
      <Icon size={30} box="0 0 30 30">
        <path d="M2 2 H28 V28 H2Z" fill="#ffdb0f" />
        <path d="M15 15 H28 V28 H15Z" fill="#efb210" />
        <path d="M15 28 V15 H28Z" fill="#3c3c3c" />
      </Icon>
    ),
  },
  {
    name: "WhatsApp",
    icon: (
      <Icon size={30} box="0 0 30 30">
        <path d="M0.5 29.5 L2.5 22 A14.5 14.5 0 1 1 8 27.5Z" fill="#fff" />
        <circle cx="15" cy="15" r="12" fill="#35bf52" />
        <path d="M3 27 L5 20 L10 25Z" fill="#35bf52" />
        <path
          d="M10 8 L12.5 8 L14 12 L12.5 14 Q14 17 17 18 L19 16.5 L22.5 18.5 Q22 22 19 22 Q10 21 8 12 Q8 9 10 8Z"
          fill="#fff"
        />
      </Icon>
    ),
  },
  {
    name: "Chrome",
    open: true,
    icon: (
      <Icon size={30} box="0 0 30 30">
        <path d="M15 15 L2.4 7.8 A14.5 14.5 0 0 1 27.6 7.8Z" fill="#e03a2c" />
        <path d="M15 8 H27.6 A14.5 14.5 0 0 1 15 29.5 L21 18Z" fill="#fcc31e" />
        <path d="M15 29.5 A14.5 14.5 0 0 1 2.4 7.8 L9 18 L15 22 L18.5 21.5Z" fill="#2a9b47" />
        <circle cx="15" cy="15" r="7" fill="#fff" />
        <circle cx="15" cy="15" r="5.5" fill="#3d7de8" />
      </Icon>
    ),
  },
  {
    name: "SOLIDWORKS",
    active: true,
    icon: (
      <Icon size={30} box="0 0 30 30">
        <path d="M1 5 L15 0 L29 4 V23 L15 29 L1 24Z" fill="#9c0d14" />
        <path d="M1 5 L15 0 L29 4 L15 9Z" fill="#e8202a" />
        <path d="M15 9 L29 4 V23 L15 29Z" fill="#6e080e" />
        <text x="2" y="21" fontFamily="Liberation Sans, sans-serif" fontSize="16" fontWeight="700" fill="#fff">
          S
        </text>
        <text x="14" y="20" fontFamily="Liberation Sans, sans-serif" fontSize="15" fontWeight="700" fill="#fff">
          W
        </text>
        <text
          x="11"
          y="29"
          fontFamily="Liberation Sans, sans-serif"
          fontSize="8"
          fontWeight="700"
          fill="#fff"
          stroke="#222"
          strokeWidth="2"
          paintOrder="stroke"
        >
          2022
        </text>
      </Icon>
    ),
  },
];

/* ---------- 3D model ---------- */

// square tube seen from the side: a..b is the upper edge, h its visible height
const Tube = ({ a, b, h = 13, tone = "rail" }) => {
  const edge = (k) => `M${a[0]} ${a[1] + h * k} L${b[0]} ${b[1] + h * k}`;
  const band = (k, m) =>
    `M${a[0]} ${a[1] + h * k} L${b[0]} ${b[1] + h * k} L${b[0]} ${b[1] + h * m} L${a[0]} ${a[1] + h * m}Z`;
  const light = tone === "light";
  return (
    <g>
      <path d={band(0, 1)} fill={light ? "#152c8c" : "#1230a8"} stroke="#000" />
      <path d={band(0.05, light ? 0.55 : 0.35)} fill={light ? "#74aef2" : "#2850e0"} />
      <path d={edge(light ? 0.56 : 0.38)} stroke="#000" strokeWidth="1.3" />
      <path
        d={edge(light ? 0.3 : 0.16)}
        stroke={light ? "#12308a" : "#9cc4ff"}
        strokeWidth={light ? 1.2 : 0.8}
        strokeDasharray={light ? undefined : "3 2"}
      />
    </g>
  );
};

const Post = ({ x, y, x2, y2, w = 14 }) => (
  <g>
    <path
      d={`M${x} ${y} H${x + w} L${x2 + w} ${y2 - 1} L${x2 + w - 3} ${y2} H${x2 + 2} L${x2} ${y2 - 2}Z`}
      fill="#1230a8"
      stroke="#000"
      strokeWidth="1.3"
    />
    <path d={`M${x + 3} ${y} L${x2 + 3} ${y2} M${x + 5.5} ${y} L${x2 + 5.5} ${y2}`} stroke="#000" />
    <path d={`M${x + w - 1} ${y} L${x2 + w - 1} ${y2 - 2}`} stroke="#000" strokeWidth="2" />
    <path d={`M${x + 4.2} ${y} L${x2 + 4.2} ${y2}`} stroke="#2c56e6" strokeWidth="1.2" />
  </g>
);

const Engine = () => (
  <g transform="translate(620 420) scale(0.3333)" strokeLinejoin="round" strokeWidth="3" stroke="#050505">
    {/* air filter box */}
    <path d="M300 195 L330 165 L455 148 L565 215 L568 268 L440 270 L300 276Z" fill="#262626" />
    <path d="M300 195 L325 168 L385 240 V268 L300 276Z" fill="#0b0b0e" />
    <path d="M330 165 L455 148 L562 220 L545 226 L385 240Z" fill="#3a3c3c" />
    <ellipse cx="412" cy="190" rx="20" ry="8" fill="#4c4c4c" />
    <ellipse cx="440" cy="163" rx="20" ry="8" fill="#4c4c4c" />
    {/* left canister */}
    <path d="M100 360 L240 395 V560 L185 565 L105 512Z" fill="#131313" />
    <path d="M140 425 L195 430 V520 L145 505Z" fill="#2b2b2b" />
    <path d="M150 440 V510 M165 470 H190 V505 H160Z M120 490 H150" fill="none" stroke="#4a4a4a" />
    <path d="M92 235 L118 218 L245 203 L315 248 L312 280 L235 300 L228 390 L170 400 L92 352Z" fill="#1c1c1c" />
    <path d="M94 238 L166 288 V398 L94 352Z" fill="#040404" />
    <path d="M118 218 L245 203 L313 247 L190 266Z" fill="#383c3e" />
    <path d="M166 288 L190 266 L313 250 L312 276 L235 300 L228 390 L170 400Z" fill="#2a2a2a" />
    <path d="M163 238 Q165 218 205 212 Q245 220 245 238 Q205 258 163 238Z" fill="#2a2a2a" />
    <path d="M188 222 L185 200 L205 205 L218 204 L222 222Z" fill="#151515" />
    {/* recoil handle */}
    <path d="M135 590 L178 625 L195 600 L150 570Z" fill="#222" />
    <path d="M90 575 L122 527 Q140 520 158 542 L128 608 L95 598Z" fill="#292725" />
    {/* crank case */}
    <path
      d="M400 530 L480 500 L640 495 L655 545 L668 565 L665 640 L675 665 L655 700 L682 720 L678 745 L660 755 L662 800 L640 830 L480 850 L340 842 L330 540Z"
      fill="#292929"
    />
    <path d="M495 585 L612 562 V775 L490 800Z" fill="#383838" />
    <path d="M490 660 L612 625 M495 690 L612 640" fill="none" />
    <path d="M475 800 L635 785 L640 828 L485 850 L470 830Z" fill="#2f2f2f" />
    <path d="M550 815 h22 v18 h-22z" fill="#1b1b1b" />
    <path d="M612 550 L630 545 V780 H612Z" fill="#0c0c0c" />
    {[550, 585, 630, 672, 720, 795].map((y) => (
      <g key={y}>
        <rect x="630" y={y - 10} width="34" height="20" rx="6" fill="#333" />
        <circle cx="662" cy={y} r="9" fill="#3a3a3a" />
      </g>
    ))}
    {/* fan housing */}
    <path
      d="M170 590 Q215 535 270 520 L420 535 Q500 600 495 690 Q490 780 460 835 L350 842 L262 805 Q180 780 168 660Z"
      fill="#33312f"
    />
    <path d="M352 640 L480 615 L494 690 L488 760 L356 778Z" fill="#3d3c3a" stroke="none" />
    <path d="M350 545 Q430 660 345 838" fill="none" stroke="#111" strokeWidth="6" />
    <path d="M350 632 L400 620 M360 778 L470 765 M460 545 Q510 670 462 830" fill="none" />
    <path d="M220 555 Q260 520 300 525 Q375 640 340 842 Q290 835 262 805 L215 790 Q275 670 220 555Z" fill="#282726" />
    <path d="M262 525 Q345 650 318 835" fill="none" strokeWidth="8" />
    <path d="M290 530 Q370 660 340 838" fill="none" strokeWidth="6" />
    <path d="M170 592 Q190 575 215 575 Q290 690 240 795 Q165 760 168 650Z" fill="#090808" />
    <path d="M205 575 L270 540 M262 640 Q290 615 322 630 Q300 650 262 640Z M275 765 Q300 745 325 770 Q300 785 275 765Z" fill="#353535" />
    <path d="M236 570 L285 540" stroke="#7a7a7a" strokeWidth="4" />
    <path d="M205 620 Q245 690 215 770" fill="none" stroke="#1d1a18" strokeWidth="6" />
    {/* filler */}
    <ellipse cx="432" cy="615" rx="28" ry="34" fill="#1c1c1c" />
    <ellipse cx="438" cy="615" rx="18" ry="24" fill="#3a3a3a" />
    <path d="M430 596 L446 634" strokeWidth="6" />
    <path d="M430 545 L470 560 L490 600 L500 670 L482 690" fill="none" stroke="#0b0b0b" strokeWidth="8" />
    <path d="M555 545 L600 510 L640 505 L590 560Z M480 530 L510 545 L495 570Z" fill="#141414" />
    {/* fuel tank */}
    <path d="M216 440 L232 405 L365 465 L670 425 L672 492 L400 536 L330 518 L215 470Z" fill="#262627" />
    <path d="M330 475 L400 480 L402 534 L332 515Z" fill="#3c3c3c" stroke="none" />
    <path
      d="M232 312 L266 282 Q330 256 400 266 L560 260 Q630 285 655 335 L682 400 Q690 415 670 425 L365 466 Q270 430 222 395 Q215 385 226 378Z"
      fill="#2e2e2e"
    />
    <path d="M232 312 L345 385 L330 455 Q270 430 222 395Z" fill="#060606" />
    <path d="M266 282 L235 312 L338 383 L380 350Z" fill="#3c4144" />
    <path d="M266 282 Q330 256 400 266 L560 260 Q630 285 650 330 Q520 335 380 352Z" fill="#2a2827" />
    <path d="M345 385 L380 352 Q520 335 650 330 L672 400 L365 455 L332 450Z" fill="#383838" />
    <path d="M375 360 L390 445 M398 356 L408 442 M504 342 L524 425 M470 315 Q500 330 504 342 M610 332 L648 400 M632 330 L664 396" fill="none" />
    <path d="M222 390 Q270 440 365 462 L680 412" fill="none" stroke="#4a4a4a" strokeWidth="3" />
    <path d="M218 398 Q270 450 365 472 L682 421" fill="none" strokeWidth="5" />
    <ellipse cx="440" cy="318" rx="64" ry="18" fill="#1a1a1a" stroke="none" />
    <path d="M385 275 V295 Q440 325 503 295 V275Z" fill="#1c1c1c" />
    <path d="M395 285 V302 M410 290 V308 M425 292 V310 M440 293 V311 M455 293 V311 M470 291 V309 M485 288 V305" stroke="#3e3e3e" />
    <ellipse cx="444" cy="272" rx="59" ry="16" fill="#303030" />
    <path d="M470 500 V545" fill="none" stroke="#3a3a3a" strokeWidth="14" />
    <path d="M622 495 V540" fill="none" stroke="#3a3a3a" strokeWidth="20" />
    <path d="M655 715 L662 708 M664 745 L668 738" stroke="#1c9be0" strokeWidth="6" />
  </g>
);

const Spark = ({ x, y }) => (
  <path
    d={`M${x - 5} ${y} H${x + 5} M${x} ${y - 5} V${y + 5} M${x - 4} ${y - 4} L${x + 4} ${y + 4} M${x + 4} ${y - 4} L${x - 4} ${y + 4}`}
    stroke="#c9c9c9"
    strokeWidth=".9"
  />
);

const Ring = ({ cx, cy, rx = 50, ...rest }) => (
  <ellipse cx={cx} cy={cy} rx={rx} ry="129" transform={`rotate(-8 ${cx} ${cy})`} {...rest} />
);

const Model = () => (
  <svg viewBox="11 233 1860 745" fill="none" role="img" aria-label="Assem1">
    <defs>
      <linearGradient id="whiteFill" x1="0" y1="0" x2="1" y2="1">
        <stop offset="0" stopColor="#fff" />
        <stop offset="1" stopColor="#d4d4d4" />
      </linearGradient>
      <linearGradient id="faceFill" x1="0" y1="0" x2="1" y2="1">
        <stop offset="0" stopColor="#a8dcf0" />
        <stop offset="1" stopColor="#5d93ad" />
      </linearGradient>
      <linearGradient id="winFill" x1="0" y1="0" x2="1" y2="1">
        <stop offset="0" stopColor="#7fdcff" />
        <stop offset="1" stopColor="#0f95f5" />
      </linearGradient>
      <radialGradient id="gloss" cx=".35" cy=".28" r=".8">
        <stop offset="0" stopColor="#fff" stopOpacity=".8" />
        <stop offset=".35" stopColor="#fff" stopOpacity=".08" />
        <stop offset="1" stopColor="#000" stopOpacity=".3" />
      </radialGradient>
      <linearGradient id="ringFill" x1="0" y1="0" x2="0" y2="1">
        <stop offset="0" stopColor="#a85408" />
        <stop offset=".05" stopColor="#d8700e" />
        <stop offset=".16" stopColor="#bd5a08" />
        <stop offset=".45" stopColor="#ff8a00" />
        <stop offset=".58" stopColor="#e87c02" />
        <stop offset=".68" stopColor="#7c4002" />
        <stop offset=".76" stopColor="#8c4a04" />
        <stop offset=".84" stopColor="#5a2402" />
        <stop offset="1" stopColor="#4a1c02" />
      </linearGradient>
      <linearGradient id="backRing" x1="0" y1="0" x2="0" y2="1">
        <stop offset="0" stopColor="#b39a96" />
        <stop offset=".16" stopColor="#c0a79e" />
        <stop offset=".3" stopColor="#d3bda4" />
        <stop offset=".5" stopColor="#dcbc98" />
        <stop offset=".7" stopColor="#c69467" />
        <stop offset="1" stopColor="#a8744c" />
      </linearGradient>
      <linearGradient id="glass" x1="0" y1="0" x2="0" y2="1">
        <stop offset="0" stopColor="#dcdcdc" />
        <stop offset=".18" stopColor="#d6d6d6" />
        <stop offset=".42" stopColor="#e8e8e8" />
        <stop offset=".7" stopColor="#d8d8d8" />
        <stop offset="1" stopColor="#b4b4b8" />
      </linearGradient>
      <linearGradient id="blueGlass" x1="0" y1="0" x2="0" y2="1">
        <stop offset="0" stopColor="#c4c6d8" />
        <stop offset=".5" stopColor="#b4b7ca" />
        <stop offset=".8" stopColor="#9aa0b8" />
        <stop offset="1" stopColor="#b2b6cc" />
      </linearGradient>
      <linearGradient id="beam" gradientUnits="userSpaceOnUse" x1="1130" y1="410" x2="1136" y2="452">
        <stop offset="0" stopColor="#ff8c00" />
        <stop offset=".45" stopColor="#fb8500" />
        <stop offset="1" stopColor="#bf5f00" />
      </linearGradient>
      <clipPath id="barrel">
        <path d="M902 332 L1246 281 Q1270 293 1288 328 Q1304 368 1307 423 Q1308 465 1304 490 Q1298 520 1278 537 L939 587Z" />
      </clipPath>
    </defs>

    {/* rear frame */}
    <path d="M814 448 L850 470 L850 640 L842 600 L842 560 L817 545Z" fill="#1230a8" stroke="#000" />
    <Post x={802} y={441} x2={809} y2={833} w={13} />
    <Tube a={[803, 440]} b={[850, 433]} h={11} />
    <Tube a={[819, 770]} b={[909, 756]} h={12} />

    {/* chute */}
    <path d="M842 553 L925 540 L1189 527 L1300 790 L940 845 L843 579Z" fill="#2953ff" stroke="#000" />
    <path d="M843 578 L932 628 V812 L850 642Z" fill="#16235f" stroke="#000" />
    <path d="M1178 527 L1215 540 L1298 588 V788Z" fill="#16235f" stroke="#000" />
    <Tube a={[1173, 508]} b={[1292, 573]} h={17} tone="light" />
    <path d="M1190 537 L1292 592" stroke="#dfe8ff" strokeDasharray="2 1.5" />

    {/* rollers */}
    <Tube a={[1266, 560]} b={[1309, 551]} h={12} />
    <path d="M1248 545 L1292 538 V550 L1249 557Z" fill="#b4bace" stroke="#222" />
    <path d="M1249 549 L1292 542" stroke="#f6f8ff" strokeWidth="3" />
    <path d="M1274 540 h7 v15 h-7z" fill="#8f97ad" stroke="#222" />
    <ellipse cx="1248.5" cy="551" rx="2.5" ry="6" fill="#d8dce8" stroke="#222" />

    {/* drum shell */}
    <path
      d="M902 332 L1246 281 Q1270 293 1288 328 Q1304 368 1307 423 Q1308 465 1304 490 Q1298 520 1278 537 L939 587Z"
      fill="url(#glass)"
    />
    <g clipPath="url(#barrel)">
      <path d="M960 474 L1168 440 V506 L1187 549 L939 590 L966 560Z" fill="url(#blueGlass)" />
      <path d="M966 535 L1170 505" stroke="#98989c" />
      <path d="M958 417 L1171 385 L1179 386 V398 L960 432Z" fill="#cacddc" stroke="#a9adc0" />
      <path d="M960 424 L1170 392 M962 430 L1170 398" stroke="#aab0c6" />
      <path d="M1168 386 H1179 L1182 510 H1168Z" fill="#bcc0d2" stroke="#a4a8bc" />
      <path d="M962 433 L1200 397 V406 L962 442Z" fill="#e4cfb6" />
      <path d="M1176 512 L1250 553" stroke="#a2aab8" strokeWidth="7" />
      <path d="M1176 509 L1250 550" stroke="#8a92a2" />
      <path d="M1210 524 L1238 518 V527 L1212 534Z" fill="#b2b2b2" stroke="#888" />
      <Ring cx={1277} cy={405} fill="#fff" />
      <path d="M1224 420 L1310 412 L1310 545 L1262 540 Q1230 490 1224 430Z" fill="#cfcfcf" />
      <path
        d="M1246 281 Q1212 292 1202 350 Q1194 400 1209 440 Q1213 465 1225 487 Q1240 520 1261 536 L1290 534 Q1262 520 1245 480 Q1232 452 1228 437 Q1218 386 1226 335 Q1234 296 1252 281Z"
        fill="url(#backRing)"
        stroke="#8a7a6c"
        strokeWidth="1.2"
      />
    </g>
    <path d="M880 335 L1261 277" stroke="#1b0c00" strokeWidth="3" />
    <path d="M900 332 L1248 279" stroke="#a05a14" strokeWidth=".8" />
    <path d="M939 588 L1286 536" stroke="#111" strokeWidth="2" />

    {/* far ring */}
    <path
      d="M1246 281 L1261 277 Q1275 278 1289 297 Q1302 311 1311 330 Q1329 375 1331 420 Q1332 465 1325 500 Q1318 524 1303 533 L1278 537 Q1298 520 1304 490 Q1308 465 1307 423 Q1304 368 1288 328 Q1270 293 1246 283Z"
      fill="url(#ringFill)"
      stroke="#1a0b00"
      strokeWidth="1.2"
    />
    <path d="M1246 282 Q1270 293 1288 328 Q1304 368 1307 423 Q1308 465 1304 490 Q1298 520 1278 537" stroke="#111" strokeWidth="1.8" />
    <path d="M1264 279 Q1292 290 1309 332 Q1327 377 1328 422 Q1329 465 1322 499 Q1316 520 1301 532" stroke="#3a1a00" strokeWidth=".8" />

    {/* spreader beam */}
    <path d="M960 441 L1303 390 L1307 423 L965 475Z" fill="url(#beam)" stroke="#1a0b00" strokeWidth="1.2" />

    {/* near ring and disc */}
    <Ring cx={919} cy={459} fill="url(#ringFill)" stroke="#1a0b00" strokeWidth="1.3" />
    <Ring cx={897} cy={464} rx={51} fill="#ee8200" stroke="#1a0b00" strokeWidth="1.3" />
    <Ring cx={894} cy={464} rx={51} fill="#330500" stroke="#1a0b00" strokeWidth="1.3" />
    <g transform="translate(800 260) scale(0.3571 0.3333)" stroke="#120200" strokeWidth="3">
      <path d="M168 268 L208 590 M218 650 L272 970 M188 262 L232 590 M240 650 L280 975" />
      <path d="M188 262 L232 255 L272 585 L232 590Z M240 645 L282 645 L322 968 L280 975Z" fill="#ff8a00" />
      <path d="M205 600 L240 592 L357 583 L360 632 L300 640 L205 645Z" fill="#2a0300" />
      <path d="M357 585 L398 580 L402 630 L362 635Z" fill="#ff8a00" />
    </g>

    {/* front frame */}
    <Tube a={[806, 441]} b={[926, 513]} h={13} tone="light" />
    <Tube a={[936, 513]} b={[1291, 461]} h={12} />
    <Tube a={[936, 842]} b={[1298, 789]} h={14} />
    <path d="M946 844 L1298 791" stroke="#cfe0ff" strokeWidth="2" strokeDasharray="3 3" />
    <path d="M946 842 L1298 789" stroke="#000" strokeWidth=".8" />
    <Post x={1289} y={459} x2={1296} y2={851} w={14} />
    <path d="M1286 462 L1292 458 H1302 L1304 462Z" fill="#1230a8" stroke="#000" />

    {/* engine stand */}
    <Tube a={[812, 771]} b={[932, 843]} h={14} tone="light" />
    <Tube a={[845, 659]} b={[931, 711]} h={14} tone="light" />
    <Tube a={[822, 692]} b={[882, 724]} h={13} tone="light" />
    <Tube a={[734, 698]} b={[806, 735]} h={13} tone="light" />
    <Tube a={[630, 664]} b={[690, 655]} h={14} />
    <Post x={623} y={668} x2={626} y2={861} w={13} />
    <Tube a={[627, 665]} b={[753, 739]} h={14} tone="light" />
    <Tube a={[755, 740]} b={[931, 713]} h={13} />
    <Post x={744} y={743} x2={748} y2={935} w={14} />
    <path d="M744 743 L750 738 H757 L759 743Z M622 668 L627 664 H634 L636 668Z" fill="#1230a8" stroke="#000" />
    <Post x={924} y={516} x2={931} y2={907} w={14} />
    <path d="M922 517 L928 512 H936 L939 517Z" fill="#1230a8" stroke="#000" />

    <Engine />

    {/* drive */}
    <g transform="translate(620 420) scale(0.3333)">
      <path d="M650 220 L672 560" stroke="#111" strokeWidth="20" />
      <path d="M650 220 L672 560" stroke="#3a3a3a" strokeWidth="14" />
      <ellipse cx="700" cy="605" rx="32" ry="62" fill="#4a0c0c" stroke="#150000" strokeWidth="3" />
      <ellipse cx="688" cy="605" rx="28" ry="58" fill="#4e0f10" stroke="#200" strokeWidth="3" />
      <ellipse cx="685" cy="605" rx="19" ry="44" stroke="#b01c1c" strokeWidth="3" strokeDasharray="6 4" />
      <ellipse cx="683" cy="605" rx="10" ry="28" stroke="#b82222" strokeWidth="3" strokeDasharray="5 4" />
      <rect x="650" y="597" width="30" height="22" rx="6" fill="#444" stroke="#111" strokeWidth="2" />
      <path d="M740 120 L765 112 L772 175 L755 185 L742 165Z" fill="#c9c6c0" stroke="#222" strokeWidth="3" />
      <path d="M752 150 h16 M750 168 L775 185 L768 165" stroke="#333" strokeWidth="4" />
      <path d="M765 133 L782 132 V147 L767 150Z" fill="#f08300" stroke="#222" strokeWidth="2" />
      <g transform="rotate(-5 685 153)">
        <ellipse cx="692" cy="153" rx="54" ry="110" fill="#3b0a0c" stroke="#170000" strokeWidth="4" />
        <ellipse cx="674" cy="153" rx="52" ry="108" fill="#471014" stroke="#170000" strokeWidth="4" />
        <ellipse cx="672" cy="153" rx="38" ry="82" fill="#3a0d11" stroke="#160000" strokeWidth="4" />
        <ellipse cx="690" cy="153" rx="52" ry="106" stroke="#9c1a1a" strokeWidth="2" strokeDasharray="6 5" />
      </g>
      <path d="M672 52 Q722 60 726 190 L714 640" stroke="#0a0a0a" strokeWidth="25" />
      <path d="M672 52 Q722 60 726 190 L714 640" stroke="#434343" strokeWidth="16" />
      <path d="M704 640 Q712 665 726 640Z" fill="#333" stroke="#111" />
      <ellipse cx="674" cy="155" rx="12" ry="24" fill="#5a1010" stroke="#c02020" strokeWidth="2" />
      <path d="M580 154 L670 142 L674 168 L582 185Z" fill="#f07f0a" stroke="#3a1a00" strokeWidth="3" />
      <path d="M580 168 L672 155" stroke="#a04c04" strokeWidth="4" />
      <ellipse cx="579" cy="169" rx="9" ry="16" fill="#8c3a08" stroke="#3a1a00" strokeWidth="3" />
    </g>
    <Spark x={744} y={678} />
    <Spark x={783} y={701} />
  </svg>
);

const navGlyphs = [
  ["First", "M3 1 V11 M12 1 L5 6 L12 11Z"],
  ["Previous", "M11 1 L4 6 L11 11Z"],
  ["Next", "M5 1 L12 6 L5 11Z"],
  ["Last", "M13 1 V11 M4 1 L11 6 L4 11Z"],
];

const bottomTabs = [
  ["Model", 76, 0],
  ["3D Views", 89, 0],
  ["Motion Study 1", 144, 10],
];

const App = () => {
  const [tab, setTab] = useState("Assembly");
  const [bottomTab, setBottomTab] = useState("Model");
  const [pane, setPane] = useState("Resources");
  const [query, setQuery] = useState("");

  return (
    <>
      <GlobalStyle />
      <Page>
        <TitleBar>
          <Brand>
            <Icon w={21} h={24} box="0 0 21 24">
              <path
                d="M8 1.5 Q15 -0.5 13.5 4 Q12 7.5 6 8.5 M5 11 Q12 9 11 14 Q9 21 1.5 22 L5 13 M20 10 Q13 9.5 14 13 Q18 16 17 19 Q15 22.5 10 21"
                stroke="#da291c"
                strokeWidth="1.8"
              />
            </Icon>
            <span>
              <b>SOLID</b>WORKS
            </span>
            <BrandArrow />
          </Brand>
          <Toolbar>
            {tools.map((t) => (
              <ToolItem key={t.name} $active={t.active}>
                <ToolButton aria-label={t.name}>{t.icon}</ToolButton>
                {!t.plain && (
                  <ArrowButton aria-label={`${t.name} menu`}>
                    <Down $color={t.dim && "#8a8a8a"} />
                  </ArrowButton>
                )}
              </ToolItem>
            ))}
          </Toolbar>
          <DocTitle>Assem1</DocTitle>
          <Search>
            <FolderIcon w={20} h={17} />
            <input
              placeholder="Search files and models"
              aria-label="Search files and models"
              value={query}
              onChange={(e) => setQuery(e.target.value)}
            />
            <Icon size={18} box="0 0 18 18">
              <circle cx="7.5" cy="7.5" r="6" stroke="#8a8a8a" strokeWidth="1.5" />
              <path d="M12 12 L17 17" stroke="#8a8a8a" strokeWidth="2" />
            </Icon>
            <ArrowButton aria-label="Search options" $w={19}>
              <Down $color="#777" />
            </ArrowButton>
          </Search>
          <WindowTools>
            <WindowButton aria-label="Account">
              <Icon size={24} box="0 0 24 24">
                <circle cx="12" cy="12" r="11" stroke="#444" strokeWidth="1.3" />
                <circle cx="12" cy="10.5" r="5" stroke="#444" strokeWidth="1.3" />
                <path d="M5 20.5 Q6 16 9.5 15 M19 20.5 Q18 16 14.5 15" stroke="#444" strokeWidth="1.3" />
              </Icon>
            </WindowButton>
            <WindowButton aria-label="Help">
              <Icon size={24} box="0 0 24 24">
                <circle cx="12" cy="12" r="11" stroke="#2c2c2c" strokeWidth="1.5" />
                <path d="M8.5 9 Q8.5 5.5 12 5.5 Q15.8 5.5 15.8 9 Q15.8 11 12.3 12.5 V15" stroke="#2c2c2c" strokeWidth="2.2" />
                <circle cx="12.3" cy="18" r="1.5" fill="#2c2c2c" />
              </Icon>
            </WindowButton>
            <WindowButton aria-label="Minimize">
              <MinIcon color="#444" />
            </WindowButton>
            <WindowButton aria-label="Restore">
              <RestoreIcon color="#333" />
            </WindowButton>
            <WindowButton aria-label="Close">
              <CloseIcon color="#333" />
            </WindowButton>
          </WindowTools>
        </TitleBar>

        <Ribbon>
          {ribbon.map((group, i) => (
            <Group key={group[0].id} $last={i === ribbon.length - 1}>
              {group.map((b) => (
                <RibbonButton key={b.id} $w={b.w} $active={b.active} disabled={b.disabled}>
                  {ribbonIcons[b.id]}
                  <span>{b.label}</span>
                  {b.menu && (
                    <RibbonArrow>
                      <Down />
                    </RibbonArrow>
                  )}
                </RibbonButton>
              ))}
            </Group>
          ))}
          <Collapse aria-label="Collapse ribbon">
            <Icon w={10} h={8} box="0 0 10 8">
              <path d="M1 6.5 L5 2 L9 6.5" stroke="#333" strokeWidth="2" />
            </Icon>
          </Collapse>
        </Ribbon>

        <TabRow>
          <Tabs>
            {tabs.map(([name, w, pad]) => (
              <Tab key={name} $w={w} $pad={pad} $active={tab === name} onClick={() => setTab(name)}>
                {name}
              </Tab>
            ))}
          </Tabs>
          <DocTools>
            <DocButton aria-label="Previous pane">
              <Icon w={18} h={22} box="0 0 18 22">
                <path d="M0.5 1 H17.5 V21.5 H0.5Z M0 1 H18" stroke="#a0a0a0" strokeWidth="1.3" />
                <path d="M6 7 V15 L1 11Z" fill="#a0a0a0" />
              </Icon>
            </DocButton>
            <DocButton aria-label="Next pane">
              <Icon w={18} h={22} box="0 0 18 22">
                <path d="M0.5 1 H17.5 V21.5 H0.5Z M0 1 H18" stroke="#a0a0a0" strokeWidth="1.3" />
                <path d="M12 7 V15 L17 11Z" fill="#a0a0a0" />
              </Icon>
            </DocButton>
            <DocButton aria-label="Minimize document">
              <MinIcon color="#a8a8a8" />
            </DocButton>
            <DocButton aria-label="Restore document">
              <RestoreIcon color="#a8a8a8" />
            </DocButton>
            <DocButton aria-label="Close document">
              <CloseIcon color="#a0a0a0" />
            </DocButton>
          </DocTools>
        </TabRow>

        <ViewBar>
          {viewTools.map((v) => (
            <ViewItem key={v.name}>
              <ViewButton aria-label={v.name}>{v.icon}</ViewButton>
              {v.menu && (
                <ArrowButton aria-label={`${v.name} menu`} $w={15}>
                  <Down $color="#a0a0a0" />
                </ArrowButton>
              )}
            </ViewItem>
          ))}
        </ViewBar>

        <Work>
          <Handle aria-label="Show feature tree" />
          <Scene>
            <Model />
          </Scene>
          <TaskPane>
            {paneTools.map((p) => (
              <PaneButton key={p.name} aria-label={p.name} $active={pane === p.name} onClick={() => setPane(p.name)}>
                {p.icon}
              </PaneButton>
            ))}
          </TaskPane>
        </Work>

        <BottomTabs>
          <NavButtons>
            {navGlyphs.map(([name, d]) => (
              <NavButton key={name} aria-label={name}>
                <Icon w={16} h={12} box="0 0 16 12">
                  <path d={d} fill="#7c7c94" stroke="#7c7c94" />
                </Icon>
              </NavButton>
            ))}
          </NavButtons>
          {bottomTabs.map(([name, w, pad]) => (
            <BottomTab key={name} $w={w} $pad={pad} $active={bottomTab === name} onClick={() => setBottomTab(name)}>
              {name}
            </BottomTab>
          ))}
        </BottomTabs>

        <StatusBar>
          <span>SOLIDWORKS Premium 2022 SP1.0</span>
          <StatusRight>
            <StatusText $w={115}>Under Defined</StatusText>
            <StatusText $w={239}>Editing Assembly</StatusText>
            <StatusText $w={69}>MMGS</StatusText>
            <Icon w={32} h={16} box="0 0 32 16">
              <path d="M0 9 L3 6 L6 9Z" fill="#333" />
            </Icon>
            <Icon w={17} h={15} box="0 0 17 15">
              <path d="M1 3 L6 1 L16 6 L15 10 L10 14 L1 8Z" fill="#ddd" stroke="#444" />
              <path d="M1 3 L10 9 L16 6 M10 9 V14" stroke="#444" />
              <circle cx="7" cy="5" r="2" stroke="#444" />
            </Icon>
          </StatusRight>
        </StatusBar>

        <Taskbar>
          <Apps>
            {apps.map((a) => (
              <AppButton key={a.name} aria-label={a.name} $active={a.active} $open={a.open}>
                {a.icon}
              </AppButton>
            ))}
          </Apps>
          <Tray>
            <TrayChevron aria-label="Hidden icons">
              <Icon w={14} h={9} box="0 0 14 9">
                <path d="M1 8 L7 2 L13 8" stroke="#fff" strokeWidth="2" />
              </Icon>
            </TrayChevron>
            <Icon w={20} h={16} box="0 0 20 16">
              <path d="M1 6 Q10 -3 19 6 M4 9 Q10 2.5 16 9 M6.5 11.5 Q10 8 13.5 11.5" stroke="#fff" strokeWidth="1.5" />
              <circle cx="10" cy="13.5" r="1.8" fill="#fff" />
            </Icon>
            <Icon w={20} h={16} box="0 0 20 16">
              <path d="M1 5 H4 L8.5 1.5 V14.5 L4 11 H1Z M12 5 L18.5 11.5 M18.5 5 L12 11.5" stroke="#fff" strokeWidth="1.4" />
            </Icon>
            <Icon w={20} h={16} box="0 0 20 16">
              <path d="M6 3 H16 Q18 3 18 5 V13 Q18 15 16 15 H3 Q1 15 1 13 V10" stroke="#fff" strokeWidth="1.4" />
              <path d="M8 5 H16 V13 H3.5 L7 9Z M18.5 7 H20 V11 H18.5Z M4 0 L1 6 H3 L2 10 L6.5 4.5 H4Z" fill="#fff" />
            </Icon>
            <Clock>
              21:46
              <br />
              15/05/2023
            </Clock>
          </Tray>
        </Taskbar>
      </Page>
    </>
  );
};

export default App;
